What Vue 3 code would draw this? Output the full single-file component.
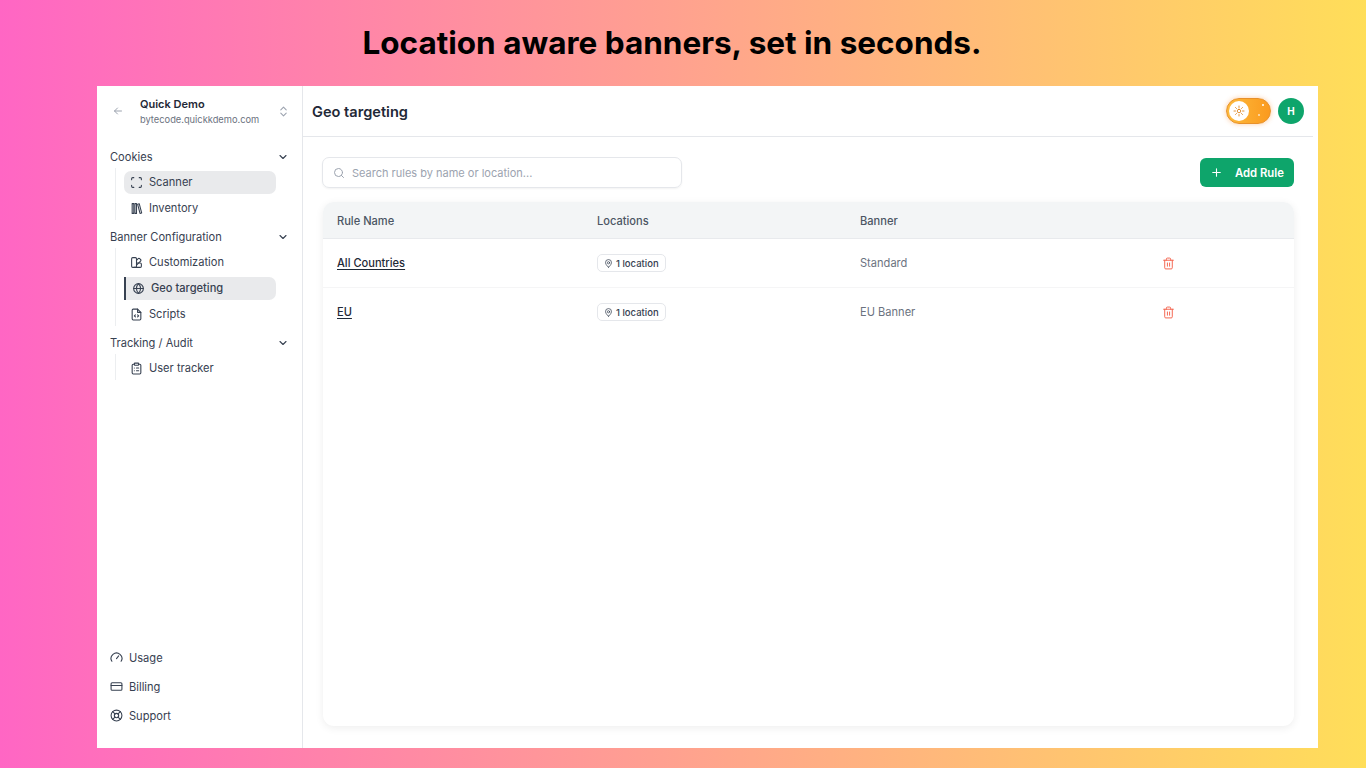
<script setup>
const groups = [
  { title: 'Cookies', items: [
    { label: 'Scanner', icon: 'scan', state: 'soft' },
    { label: 'Inventory', icon: 'library' },
  ] },
  { title: 'Banner Configuration', items: [
    { label: 'Customization', icon: 'palette' },
    { label: 'Geo targeting', icon: 'globe', state: 'active' },
    { label: 'Scripts', icon: 'code' },
  ] },
  { title: 'Tracking / Audit', items: [
    { label: 'User tracker', icon: 'clipboard' },
  ] },
]
const icons = {
  scan: ['M3 7V5a2 2 0 0 1 2-2h2', 'M17 3h2a2 2 0 0 1 2 2v2', 'M21 17v2a2 2 0 0 1-2 2h-2', 'M7 21H5a2 2 0 0 1-2-2v-2'],
  library: ['M4 3h3v18H4z', 'M9 3h3v18H9z', 'M14 4l3-.8 4.5 17-3 .8z'],
  palette: ['M10 3H5a2 2 0 0 0-2 2v14a2 2 0 0 0 2 2h5a2 2 0 0 0 2-2V5a2 2 0 0 0-2-2z', 'M12 8l3-3a2 2 0 0 1 3 0l1.500 1.500a2 2 0 0 1 0 3L12 17', 'M13 13h6a2 2 0 0 1 2 2v4a2 2 0 0 1-2 2H8'],
  globe: ['M12 3a9 9 0 1 0 0 18 9 9 0 0 0 0-18z', 'M3 12h18', 'M12 3c2.500 2.500 3.800 5.500 3.800 9s-1.300 6.500-3.800 9c-2.500-2.500-3.800-5.500-3.800-9S9.500 5.500 12 3z'],
  code: ['M14 2H6a2 2 0 0 0-2 2v16a2 2 0 0 0 2 2h12a2 2 0 0 0 2-2V8z', 'M14 2v6h6', 'M10 12.500l-2 2 2 2', 'M14 12.500l2 2-2 2'],
  clipboard: ['M9 2h6a1 1 0 0 1 1 1v2a1 1 0 0 1-1 1H9a1 1 0 0 1-1-1V3a1 1 0 0 1 1-1z', 'M16 4h2a2 2 0 0 1 2 2v14a2 2 0 0 1-2 2H6a2 2 0 0 1-2-2V6a2 2 0 0 1 2-2h2', 'M12 11h4', 'M12 16h4', 'M8 11h.01', 'M8 16h.01'],
  gauge: ['M3.500 19A10 10 0 1 1 20.500 19', 'M12 14l4-5'],
  card: ['M4 5h16a2 2 0 0 1 2 2v10a2 2 0 0 1-2 2H4a2 2 0 0 1-2-2V7a2 2 0 0 1 2-2z', 'M2 10h20'],
  lifebuoy: ['M12 2a10 10 0 1 0 0 20 10 10 0 0 0 0-20z', 'M12 8a4 4 0 1 0 0 8 4 4 0 0 0 0-8z', 'M4.900 4.900l4.300 4.300', 'M14.800 14.800l4.300 4.300', 'M14.800 9.200l4.300-4.300', 'M4.900 19.100l4.300-4.300'],
}
const footer = [
  { label: 'Usage', icon: 'gauge' },
  { label: 'Billing', icon: 'card' },
  { label: 'Support', icon: 'lifebuoy' },
]
const rules = [
  { name: 'All Countries', banner: 'Standard' },
  { name: 'EU', banner: 'EU Banner' },
]
</script>

<template>
  <div class="stage">
    <h1 class="headline">Location aware banners, set in seconds.</h1>
    <div class="window">
      <aside class="sidebar">
        <div class="site">
          <svg class="ic back" viewBox="0 0 24 24"><path d="M19 12H5M11 6l-6 6 6 6" /></svg>
          <div class="site-text">
            <div class="site-name">Quick Demo</div>
            <div class="site-url">bytecode.quickkdemo.com</div>
          </div>
          <svg class="ic updown" viewBox="0 0 24 24"><path d="M7 9l5-5 5 5M7 15l5 5 5-5" /></svg>
        </div>

        <nav class="groups">
          <section v-for="g in groups" :key="g.title" class="group">
            <div class="group-head">
              <span>{{ g.title }}</span>
              <svg class="ic chev" viewBox="0 0 24 24"><path d="M6 9l6 6 6-6" /></svg>
            </div>
            <div class="items">
              <div v-for="it in g.items" :key="it.label" class="item" :class="it.state">
                <svg class="ic item-ic" viewBox="0 0 24 24"><path v-for="d in icons[it.icon]" :key="d" :d="d" /></svg>
                <span>{{ it.label }}</span>
              </div>
            </div>
          </section>
        </nav>

        <div class="foot">
          <div v-for="f in footer" :key="f.label" class="foot-item">
            <svg class="ic item-ic" viewBox="0 0 24 24"><path v-for="d in icons[f.icon]" :key="d" :d="d" /></svg>
            <span>{{ f.label }}</span>
          </div>
        </div>
      </aside>

      <main class="main">
        <header class="topbar">
          <h2 class="page-title">Geo targeting</h2>
          <div class="top-right">
            <div class="toggle">
              <span class="knob">
                <svg class="sun" viewBox="0 0 24 24"><path d="M12 8.500a3.500 3.500 0 1 0 0 7 3.500 3.500 0 0 0 0-7zM12 2v3M12 19v3M2 12h3M19 12h3M5 5l2 2M17 17l2 2M5 19l2-2M17 7l2-2" /></svg>
              </span>
              <i class="star s1"></i>
              <i class="star s2"></i>
            </div>
            <div class="avatar">H</div>
          </div>
        </header>

        <div class="content">
          <div class="toolbar">
            <label class="search">
              <svg class="ic search-ic" viewBox="0 0 24 24"><circle cx="11" cy="11" r="8" /><path d="M21 21l-4.300-4.300" /></svg>
              <span>Search rules by name or location...</span>
            </label>
            <button class="add" type="button">
              <svg class="ic plus" viewBox="0 0 24 24"><path d="M5 12h14M12 5v14" /></svg>
              <span>Add Rule</span>
            </button>
          </div>

          <div class="card">
            <div class="row head">
              <span>Rule Name</span>
              <span>Locations</span>
              <span>Banner</span>
              <span></span>
            </div>
            <div v-for="r in rules" :key="r.name" class="row body">
              <a class="rule-name">{{ r.name }}</a>
              <span>
                <span class="pill">
                  <svg class="ic pin" viewBox="0 0 24 24"><path d="M12 22s8-6.500 8-12.500a8 8 0 1 0-16 0C4 15.500 12 22 12 22z" /><circle cx="12" cy="10" r="3" /></svg>
                  1 location
                </span>
              </span>
              <span class="banner">{{ r.banner }}</span>
              <span>
                <svg class="ic trash" viewBox="0 0 24 24"><path d="M3 6h18M8 6V4a2 2 0 0 1 2-2h4a2 2 0 0 1 2 2v2M19 6v14a2 2 0 0 1-2 2H7a2 2 0 0 1-2-2V6M10 11v6M14 11v6" /></svg>
              </span>
            </div>
          </div>
        </div>
      </main>
    </div>
  </div>
</template>

<style>
html, body { margin: 0; padding: 0; }
</style>

<style scoped>
.stage {
  width: 1366px;
  height: 768px;
  overflow: hidden;
  display: flex;
  flex-direction: column;
  background: linear-gradient(90deg, #ff66c4 0%, #ffde59 100%);
  font-family: Inter, "Liberation Sans", sans-serif;
  color: #374151;
}
.headline {
  margin: 0;
  height: 86px;
  line-height: 85px;
  text-align: center;
  font-family: Inter, "Liberation Sans", sans-serif;
  font-size: 31.500px;
  font-weight: 700;
  color: #000;
  white-space: nowrap;
  padding-right: 22px;
  box-sizing: border-box;
  flex: none;
}
.window {
  margin-left: 97px;
  width: 1221px;
  height: 662px;
  background: #fff;
  display: flex;
  flex: none;
}
.ic {
  fill: none;
  stroke: currentColor;
  stroke-width: 2;
  stroke-linecap: round;
  stroke-linejoin: round;
  flex: none;
}
.sidebar {
  width: 206px;
  box-sizing: border-box;
  border-right: 1px solid #e5e7eb;
  display: flex;
  flex-direction: column;
  flex: none;
  font-size: 11.100px;
}
.site {
  display: flex;
  align-items: center;
  height: 50px;
  padding: 0 13px 0 15px;
}
.back { width: 12px; height: 12px; color: #9ca3af; margin-right: 16px; }
.site-text { flex: 1; margin-top: 2px; }
.site-name { font-size: 11px; font-weight: 600; color: #1f2937; line-height: 15px; }
.site-url { font-size: 9.300px; color: #6b7280; line-height: 15px; }
.updown { width: 13px; height: 13px; color: #9ca3af; margin-right: -1px; }
.groups { padding: 11px 13px 0 13px; }
.group-head {
  display: flex;
  justify-content: space-between;
  align-items: center;
  height: 20px;
  color: #374151;
}
.chev { width: 12px; height: 12px; color: #374151; stroke-width: 2.200; }
.items {
  margin: 1px 13px 7.500px 5px;
  padding: 2.500px 0 0 8px;
  border-left: 1px solid #eceef0;
  display: flex;
  flex-direction: column;
  gap: 3px;
}
.item {
  display: flex;
  align-items: center;
  gap: 6px;
  height: 23px;
  padding-left: 6px;
  border-radius: 7px;
  box-sizing: border-box;
  color: #374151;
}
.item-ic { width: 13px; height: 13px; color: #374151; stroke-width: 2; }
.item.soft { background: #e9eaec; }
.item.active {
  background: #e9eaec;
  border-left: 2px solid #374151;
  border-radius: 0 7px 7px 0;
  font-weight: 500;
}
.foot {
  margin-top: auto;
  padding: 0 0 23.500px 13px;
  display: flex;
  flex-direction: column;
  gap: 11px;
}
.foot-item {
  display: flex;
  align-items: center;
  gap: 6px;
  height: 18px;
}
.main { flex: 1; min-width: 0; display: flex; flex-direction: column; }
.topbar {
  height: 51px;
  box-sizing: border-box;
  border-bottom: 1px solid #e5e7eb;
  margin-right: 5px;
  display: flex;
  align-items: center;
  justify-content: space-between;
  padding: 0 9px 0 9px;
  flex: none;
}
.page-title { margin: 1px 0 0; font-size: 14.600px; font-weight: 600; color: #1f2937; }
.top-right { display: flex; align-items: center; gap: 7px; }
.toggle {
  position: relative;
  width: 45px;
  height: 26px;
  box-sizing: border-box;
  border-radius: 13px;
  background: linear-gradient(90deg, #fdba3c, #fb9a1e);
  border: 1px solid #e8912a;
  box-shadow: 0 0 5px rgba(251, 146, 60, .45);
  display: flex;
  align-items: center;
  padding-left: 2px;
}
.knob {
  width: 20px;
  height: 20px;
  border-radius: 50%;
  background: #fff;
  display: flex;
  align-items: center;
  justify-content: center;
}
.sun { width: 12px; height: 12px; fill: none; stroke: #d97706; stroke-width: 1.600; stroke-linecap: round; }
.star { position: absolute; border-radius: 50%; background: #fff; }
.s1 { width: 2px; height: 2px; right: 6px; top: 5px; }
.s2 { width: 2px; height: 2px; right: 10px; top: 15px; opacity: .7; }
.avatar {
  width: 26px;
  height: 26px;
  border-radius: 50%;
  background: #0ea56b;
  color: #fff;
  font-size: 10px;
  font-weight: 700;
  display: flex;
  align-items: center;
  justify-content: center;
}
.content { flex: 1; padding: 20px 24px 22px 19px; display: flex; flex-direction: column; min-height: 0; }
.toolbar { display: flex; justify-content: space-between; align-items: center; height: 31px; flex: none; }
.search {
  width: 360px;
  height: 31px;
  box-sizing: border-box;
  border: 1px solid #e5e7eb;
  border-radius: 7px;
  display: flex;
  align-items: center;
  padding-left: 10px;
  gap: 7px;
  color: #9ca3af;
  font-size: 11px;
  box-shadow: 0 1px 2px rgba(0, 0, 0, .05);
}
.search-ic { width: 12px; height: 12px; color: #9ca3af; }
.add {
  width: 94px;
  height: 29px;
  border: 0;
  border-radius: 6px;
  background: #0ea56b;
  color: #fff;
  font: 600 11.300px Inter, sans-serif;
  display: flex;
  align-items: center;
  padding: 0 0 0 10px;
}
.plus { width: 13px; height: 13px; margin-right: 12px; }
.card {
  margin-top: 14px;
  margin-left: 1px;
  flex: 1;
  background: #fff;
  border-radius: 11px;
  box-shadow: 0 2px 8px rgba(0, 0, 0, .07);
  overflow: hidden;
  font-size: 11.100px;
}
.row {
  display: grid;
  grid-template-columns: 260px 263px 302px 1fr;
  align-items: center;
}
.row > * { padding-left: 14px; }
.head {
  height: 37px;
  box-sizing: border-box;
  background: #f3f5f6;
  border-bottom: 1px solid #e8eaed;
  color: #4b5563;
  font-weight: 500;
  padding-top: 1px;
}
.body {
  height: 49px;
  box-sizing: border-box;
  border-bottom: 1px solid #f5f5f6;
}
.body:last-child { border-bottom-color: transparent; }
.rule-name {
  color: #1f2937;
  font-weight: 500;
  text-decoration: underline;
  text-underline-offset: 2px;
}
.pill {
  display: inline-flex;
  align-items: center;
  gap: 3px;
  height: 18px;
  box-sizing: border-box;
  padding: 0 6px;
  border: 1px solid #e5e7eb;
  border-radius: 5px;
  font-size: 9.500px;
  font-weight: 500;
  color: #374151;
  vertical-align: middle;
}
.pin { width: 9px; height: 9px; }
.banner { color: #6b7280; }
.trash { width: 13px; height: 13px; color: #f4654f; display: block; stroke-width: 1.800; }
</style>
